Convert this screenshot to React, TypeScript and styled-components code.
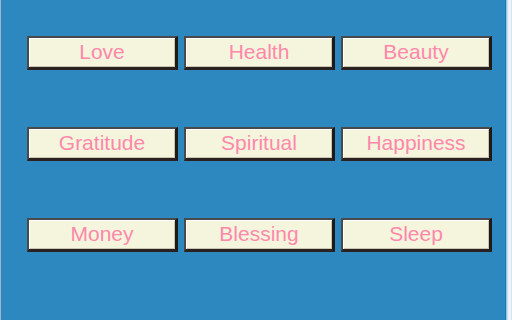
import React from "react";
import styled, { createGlobalStyle } from "styled-components";

const Global = createGlobalStyle`
  html, body { margin: 0; padding: 0; background: #2e88c0; }
  body { font-family: "Liberation Sans", Arial, sans-serif; }
`;

const Page = styled.div`
  width: 512px;
  height: 320px;
  display: flex;
  background: #2e88c0;
  border-left: 1px solid #9fb3c6;
  box-sizing: border-box;
  overflow: hidden;
`;

const Main = styled.div`
  flex: 1;
  padding: 36px 0 0 26px;
`;

const Edge = styled.div`
  width: 7px;
  background: linear-gradient(
    to right,
    #1f79b3 0px,
    #1f79b3 1px,
    #7fb8dc 1px,
    #dfeef7 3px,
    #f4f8fb 5px,
    #cfdde8 7px
  );
`;

const Grid = styled.div`
  display: grid;
  grid-template-columns: repeat(3, 151px);
  grid-auto-rows: 34px;
  column-gap: 6px;
  row-gap: 57px;
`;

const Button = styled.button`
  box-sizing: border-box;
  margin: 0;
  padding: 0 0 3px;
  background: #f5f5de;
  border-style: solid;
  border-width: 2px 3px 3px 2px;
  border-color: #4a4a4a #1e1a18 #2a2220 #4a4a4a;
  box-shadow: inset 1px 1px 0 #ffffff, inset -1px -1px 0 #c9c6b4;
  color: #ff88aa;
  font-family: "Liberation Sans", Arial, sans-serif;
  font-size: 21px;
  line-height: 1;
  text-align: center;
  cursor: pointer;
`;

const labels = [
  "Love", "Health", "Beauty",
  "Gratitude", "Spiritual", "Happiness",
  "Money", "Blessing", "Sleep",
];

export default function App() {
  return (
    <>
      <Global />
      <Page>
        <Main>
          <Grid>
            {labels.map((l) => (
              <Button key={l}>{l}</Button>
            ))}
          </Grid>
        </Main>
        <Edge />
      </Page>
    </>
  );
}
